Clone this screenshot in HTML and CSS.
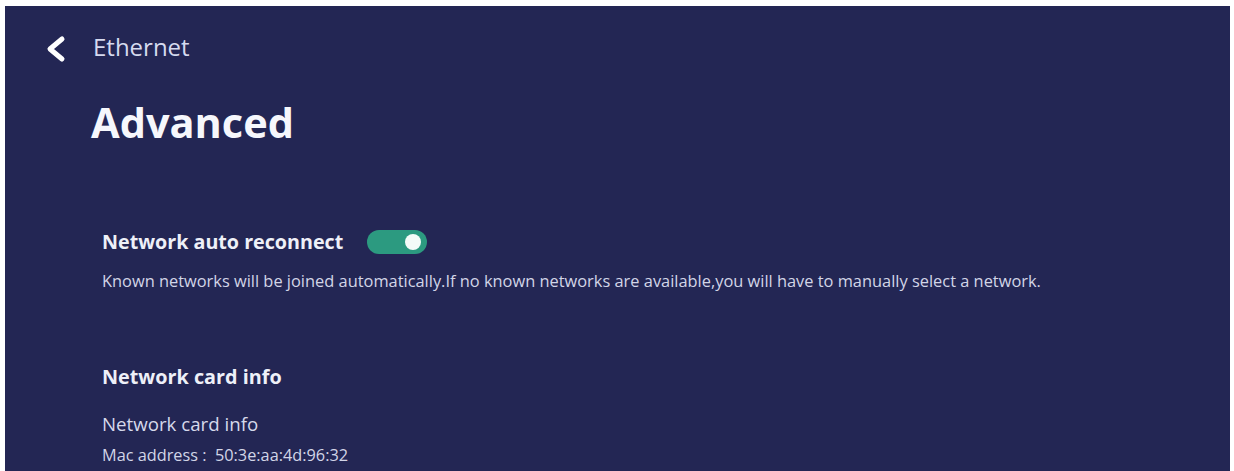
FILE: index.html
```html
<!DOCTYPE html>
<html lang="en">
<head>
    <meta charset="UTF-8">
    <meta name="viewport" content="width=device-width, initial-scale=1.0">
    <title>Advanced</title>
    <link rel="stylesheet" href="styles.css">
</head>
<body>
    <div class="panel">
        <div class="header">
            <svg class="back-icon" width="22" height="28" viewBox="0 0 22 28">
                <polyline points="17,4 5,14 17,24" fill="none" stroke="#ffffff" stroke-width="5" stroke-linecap="round" stroke-linejoin="round"/>
            </svg>
            <span class="header-title">Ethernet</span>
        </div>
        <h1 class="page-title">Advanced</h1>
        <div class="settings">
            <div class="setting-row">
                <span class="setting-name">Network auto reconnect</span>
                <div class="toggle on"><div class="toggle-knob"></div></div>
            </div>
            <p class="setting-desc">Known networks will be joined automatically.If no known networks are available,you will have to manually select a network.</p>

            <div class="section-name">Network card info</div>
            <div class="info-title">Network card info</div>
            <div class="info-line">Mac address :&nbsp; 50:3e:aa:4d:96:32</div>
        </div>
    </div>
</body>
</html>
```

FILE: styles.css
```css
body {
    margin: 0;
    padding: 0;
    background-color: #ffffff;
    font-family: "Open Sans", "Noto Sans", sans-serif;
    overflow: hidden;
}
.panel {
    margin: 6px 4px 0 5px;
    height: 465px;
    background-color: #232654;
    padding: 25px 0 0 40px;
    box-sizing: border-box;
}
.header {
    display: flex;
    align-items: center;
    height: 32px;
}
.back-icon {
    display: block;
    margin-top: 3px;
}
.header-title {
    margin-left: 26px;
    font-size: 24px;
    line-height: 32px;
    color: #d6daef;
}
.page-title {
    margin: 35px 0 0 46px;
    font-size: 41.5px;
    line-height: 48px;
    font-weight: 700;
    color: #f6f7fc;
}
.settings {
    padding-left: 57px;
}
.setting-row {
    display: flex;
    align-items: center;
    margin-top: 83px;
    height: 26px;
}
.setting-name {
    font-size: 19.7px;
    line-height: 26px;
    font-weight: 700;
    color: #eef0f8;
}
.toggle {
    width: 60px;
    height: 24px;
    border-radius: 12px;
    margin-left: 24px;
    background-color: #4a4e78;
    display: flex;
    align-items: center;
    justify-content: flex-start;
    padding: 0 6px;
    box-sizing: border-box;
}
.toggle.on {
    background-color: #2c9a80;
    justify-content: flex-end;
}
.toggle-knob {
    width: 16px;
    height: 16px;
    border-radius: 50%;
    background-color: #f4fbf8;
}
.setting-desc {
    margin: 16px 0 0 0;
    font-size: 16.4px;
    line-height: 20px;
    color: #d2d5e7;
}
.section-name {
    margin-top: 73px;
    font-size: 19.8px;
    line-height: 26px;
    font-weight: 700;
    color: #eef0f8;
}
.info-title {
    margin-top: 21px;
    font-size: 18.7px;
    line-height: 26px;
    color: #d6d9eb;
}
.info-line {
    margin-top: 8px;
    font-size: 16.3px;
    line-height: 20px;
    color: #d2d5e7;
}
```
